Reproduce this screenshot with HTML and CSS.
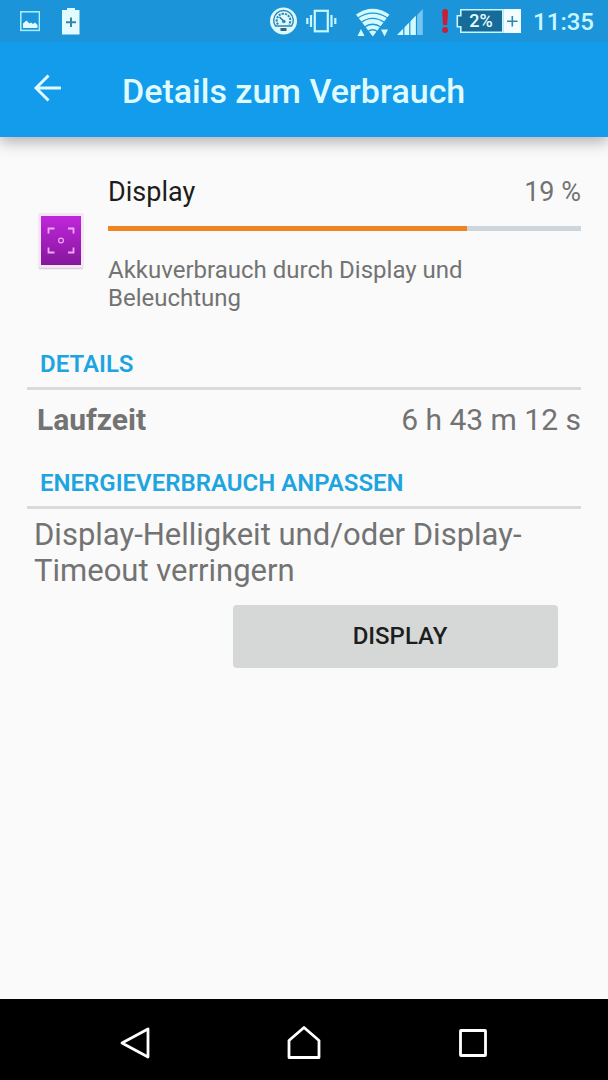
FILE: index.html
```html
<!DOCTYPE html>
<html lang="de">
<head>
<meta charset="utf-8">
<meta name="viewport" content="width=device-width, initial-scale=1">
<title>Details zum Verbrauch</title>
<link rel="stylesheet" href="styles.css">
</head>
<body>
<div class="status-bar">
  <div class="status-notifications">
    <svg width="20" height="42" viewBox="20 0 20 42" aria-hidden="true">
      <rect x="20.8" y="11.8" width="18.6" height="18.6" fill="none" stroke="#a9f0fb" stroke-width="1.500"/>
      <path d="M23 28v-4.500l3.500-3 3 3 1.500-1 2 1.500 2-1.500 2.500 2.500v3z" fill="#e2fbff"/>
    </svg>
    <svg width="18" height="42" viewBox="62 0 18 42" aria-hidden="true">
      <path d="M62 10h5V8h8v2h4.500v24.500H62z" fill="#e2fbff"/>
      <path d="M71 17.500v9.500M66 22.300h10" stroke="#3a84a8" stroke-width="2"/>
    </svg>
  </div>
  <div class="status-system">
    <svg width="28" height="42" viewBox="270 0 28 42" aria-hidden="true">
      <circle cx="283.500" cy="21" r="13.500" fill="#dcfaff"/>
      <path d="M275.500 26a9.800 9.800 0 1 1 16 0z" fill="#dcfaff" stroke="#2b86b5" stroke-width="1.400"/>
      <path d="M278 24.500a6.800 6.800 0 1 1 11 0" fill="none" stroke="#2b86b5" stroke-width="2" stroke-dasharray="2.200 1"/>
      <path d="M279.500 17l4 4" stroke="#2b6f92" stroke-width="1.500"/>
      <circle cx="283.800" cy="21.500" r="1.800" fill="#2b86b5"/>
      <rect x="280.500" y="28" width="6" height="3" fill="#35657b"/>
    </svg>
    <svg width="32" height="42" viewBox="303 0 32 42" aria-hidden="true">
      <rect x="312.800" y="10.800" width="13" height="20.500" fill="none" stroke="#c8f7ff" stroke-width="2.200"/>
      <path d="M309 15v12M305.300 18v6M329.500 15v12M333.300 18v6" stroke="#c8f7ff" stroke-width="2.200"/>
    </svg>
    <svg class="wifi" width="34" height="42" viewBox="354 0 34 42" aria-hidden="true">
      <path d="M354 14.500Q370.500 3 387.500 14.500L370.800 36.500z" fill="#d2faff"/>
      <path d="M355.500 18.300Q370.500 8 386 18.300M358.500 22.800Q370.500 14 383 22.800M362 27.500Q370.500 21 379.500 27.500M365.500 32Q370.500 27.500 376 32" fill="none" stroke="#2397d2" stroke-width="1.300"/>
      <path d="M355.500 36h7l-3.500-7zM379 29.500h7l-3.500 7z" fill="#d2faff"/>
    </svg>
    <svg width="26" height="42" viewBox="397 0 26 42" aria-hidden="true">
      <path d="M397 35L416 15.500V35z" fill="#d2faff"/>
      <path d="M416.500 15.500L422.800 9v26h-6.300z" fill="#73c6f0"/>
      <path d="M403.800 27v8M409.800 20v15M416.500 14v21" stroke="#1992d8" stroke-width="1.200"/>
    </svg>
    <svg class="alert" width="7" height="42" viewBox="443 0 7 42" aria-hidden="true">
      <path d="M443.200 12q0-3 2.900-3t2.900 3l-.8 13h-4.200z" fill="#c91f35"/>
      <circle cx="446.100" cy="30" r="2.900" fill="#c91f35"/>
    </svg>
    <svg width="66" height="42" viewBox="457 0 66 42" role="img" aria-label="Akku 2%">
      <path d="M461.800 9.800h42v22.400h-42v-5.500h-3.500v-11h3.500z" fill="#166b99" stroke="#c8f7ff" stroke-width="1.600"/>
      <rect x="504.500" y="9" width="17.500" height="24" fill="#f3fdff"/>
      <path d="M513.300 16v10.500M508 21.200h10.500" stroke="#2e86a9" stroke-width="1.600"/>
      <text class="battery-level" x="482" y="27" text-anchor="middle">2%</text>
    </svg>
    <time class="clock" datetime="11:35">11:35</time>
  </div>
</div>

<header class="app-bar">
  <button class="icon-button" type="button" aria-label="Zurück">
    <svg width="28" height="28" viewBox="0 0 28 28" aria-hidden="true">
      <path d="M27 14H2M14.500 1.500L2 14l12.500 12.500" fill="none" stroke="#dffbff" stroke-width="3"/>
    </svg>
  </button>
  <h1 class="title">Details zum Verbrauch</h1>
</header>

<main class="content">
  <section class="usage">
    <svg class="usage-icon" width="48" height="58" viewBox="0 0 48 58" aria-hidden="true">
      <defs>
        <linearGradient id="screen" x1="0" y1="0" x2="0" y2="1">
          <stop offset="0" stop-color="#c126dc"/>
          <stop offset="1" stop-color="#85179b"/>
        </linearGradient>
      </defs>
      <rect x="1" y="1" width="46" height="56" rx="2" fill="#f3e6f5"/>
      <path d="M2 56.500h44" stroke="#dccfe0" stroke-width="1.500"/>
      <rect x="4" y="4" width="40" height="49" fill="url(#screen)"/>
      <path d="M11.500 21.500v-5h6M31 16.500h5.500v5M11.500 35.500v5h6M31 40.500h5.500v-5" fill="none" stroke="#efa9f5" stroke-width="1.800"/>
      <circle cx="24" cy="28.500" r="2.400" fill="none" stroke="#efa9f5" stroke-width="1.200"/>
    </svg>
    <div class="usage-body">
      <div class="usage-head">
        <label class="usage-name" for="usage-level">Display</label>
        <span class="usage-percent">19 %</span>
      </div>
      <progress class="usage-level" id="usage-level" max="100" value="76"></progress>
      <p class="usage-text">Akkuverbrauch durch Display und Beleuchtung</p>
    </div>
  </section>

  <section>
    <h2 class="section-title">DETAILS</h2>
    <dl class="detail-row">
      <dt class="detail-name">Laufzeit</dt>
      <dd class="detail-value">6 h 43 m 12 s</dd>
    </dl>
  </section>

  <section>
    <h2 class="section-title">ENERGIEVERBRAUCH ANPASSEN</h2>
    <p class="advice">Display-Helligkeit und/oder Display-Timeout verringern</p>
    <div class="actions">
      <button class="action-button" type="button">DISPLAY</button>
    </div>
  </section>
</main>

<nav class="nav-bar" aria-label="Systemnavigation">
  <button class="nav-button" type="button" aria-label="Zurück">
    <svg width="34" height="34" viewBox="0 0 34 34" aria-hidden="true">
      <path d="M30 3v28L4 17z" fill="none" stroke="#fff" stroke-width="2.800" stroke-linejoin="round"/>
    </svg>
  </button>
  <button class="nav-button" type="button" aria-label="Startseite">
    <svg width="34" height="34" viewBox="0 0 34 34" aria-hidden="true">
      <path d="M2 31.500V14.500L17 1.500l15 13v17z" fill="none" stroke="#fff" stroke-width="2.800" stroke-linejoin="round"/>
    </svg>
  </button>
  <button class="nav-button" type="button" aria-label="Letzte Apps">
    <svg width="34" height="34" viewBox="0 0 34 34" aria-hidden="true">
      <rect x="4.500" y="4.500" width="25" height="25" rx=".5" fill="none" stroke="#fff" stroke-width="2.800"/>
    </svg>
  </button>
</nav>
</body>
</html>
```
FILE: styles.css
```css
* {
  box-sizing: border-box;
}

body {
  display: flex;
  flex-direction: column;
  min-height: 100vh;
  margin: 0;
  background: #fafafa;
  color: #737373;
  font-family: Roboto, "Liberation Sans", sans-serif;
}

h1, h2, p, dl, dd {
  margin: 0;
}

button {
  padding: 0;
  border: 0;
  background: none;
  font-family: inherit;
}

svg {
  display: block;
  flex: none;
}

.status-bar {
  z-index: 1;
  display: flex;
  justify-content: space-between;
  padding: 0 14px 0 20px;
  background: #1b94da;
}

.status-notifications {
  display: flex;
  gap: 22px;
}

.status-system {
  display: flex;
  align-items: center;
  gap: 7px;
}

.wifi {
  margin-left: 12px;
}

.alert {
  margin-left: 12px;
}

.battery-level {
  fill: #e6fcff;
  font-size: 18px;
  font-weight: 500;
}

.clock {
  margin-left: 4px;
  padding-top: 3px;
  color: #c8f7ff;
  font-size: 24px;
  font-weight: 500;
  line-height: 39px;
}

.app-bar {
  display: flex;
  align-items: center;
  gap: 60px;
  padding: 25px 34px 24px;
  background: #139ceb;
  box-shadow: 0 5px 14px rgba(0, 0, 0, 0.3);
}

.icon-button {
  padding-bottom: 4px;
}

.title {
  padding-top: 3px;
  color: #dffbff;
  font-size: 34px;
  font-weight: 500;
  line-height: 43px;
}

.content {
  flex: 1;
  padding: 38px 27px 24px;
}

.usage {
  display: flex;
  align-items: center;
  gap: 23px;
  padding-left: 10px;
}

.usage-icon {
  margin-bottom: 6px;
}

.usage-body {
  flex: 1;
}

.usage-head {
  display: flex;
  justify-content: space-between;
  font-size: 27px;
  line-height: 34px;
}

.usage-name {
  color: #1c1c1c;
}

.usage-level {
  display: block;
  width: 100%;
  height: 5px;
  margin: 17px 0 25px;
  border: 0;
  background: #ccd6dc;
  appearance: none;
}

.usage-level::-webkit-progress-bar {
  background: #ccd6dc;
}

.usage-level::-webkit-progress-value {
  background: #f08322;
}

.usage-level::-moz-progress-bar {
  background: #f08322;
}

.usage-text {
  max-width: 380px;
  font-size: 24px;
  line-height: 28px;
}

.section-title {
  padding: 12px 13px 9px;
  border-bottom: 3px solid #dadada;
  color: #1ea5df;
  font-size: 24px;
  font-weight: 600;
  line-height: 28px;
}

.usage + section {
  margin-top: 26px;
}

.detail-row {
  display: flex;
  justify-content: space-between;
  padding: 10px 0 18px 10px;
  font-size: 30px;
  line-height: 39px;
}

.detail-name {
  font-weight: 700;
}

.advice {
  padding: 8px 7px 0;
  font-size: 31px;
  line-height: 36px;
}

.actions {
  display: flex;
  justify-content: flex-end;
  padding: 16px 23px 0;
}

.action-button {
  width: 325px;
  max-width: 100%;
  padding: 17px 0 18px 9px;
  border-radius: 4px;
  background: #d6d8d7;
  color: #1c1e1d;
  font-size: 24px;
  font-weight: 500;
  line-height: 28px;
}

.nav-bar {
  display: flex;
  justify-content: center;
  padding: 0 50px;
  background: #000;
}

.nav-button {
  display: flex;
  flex: 1;
  align-items: center;
  justify-content: center;
  height: 81px;
  padding-top: 6px;
}
```
